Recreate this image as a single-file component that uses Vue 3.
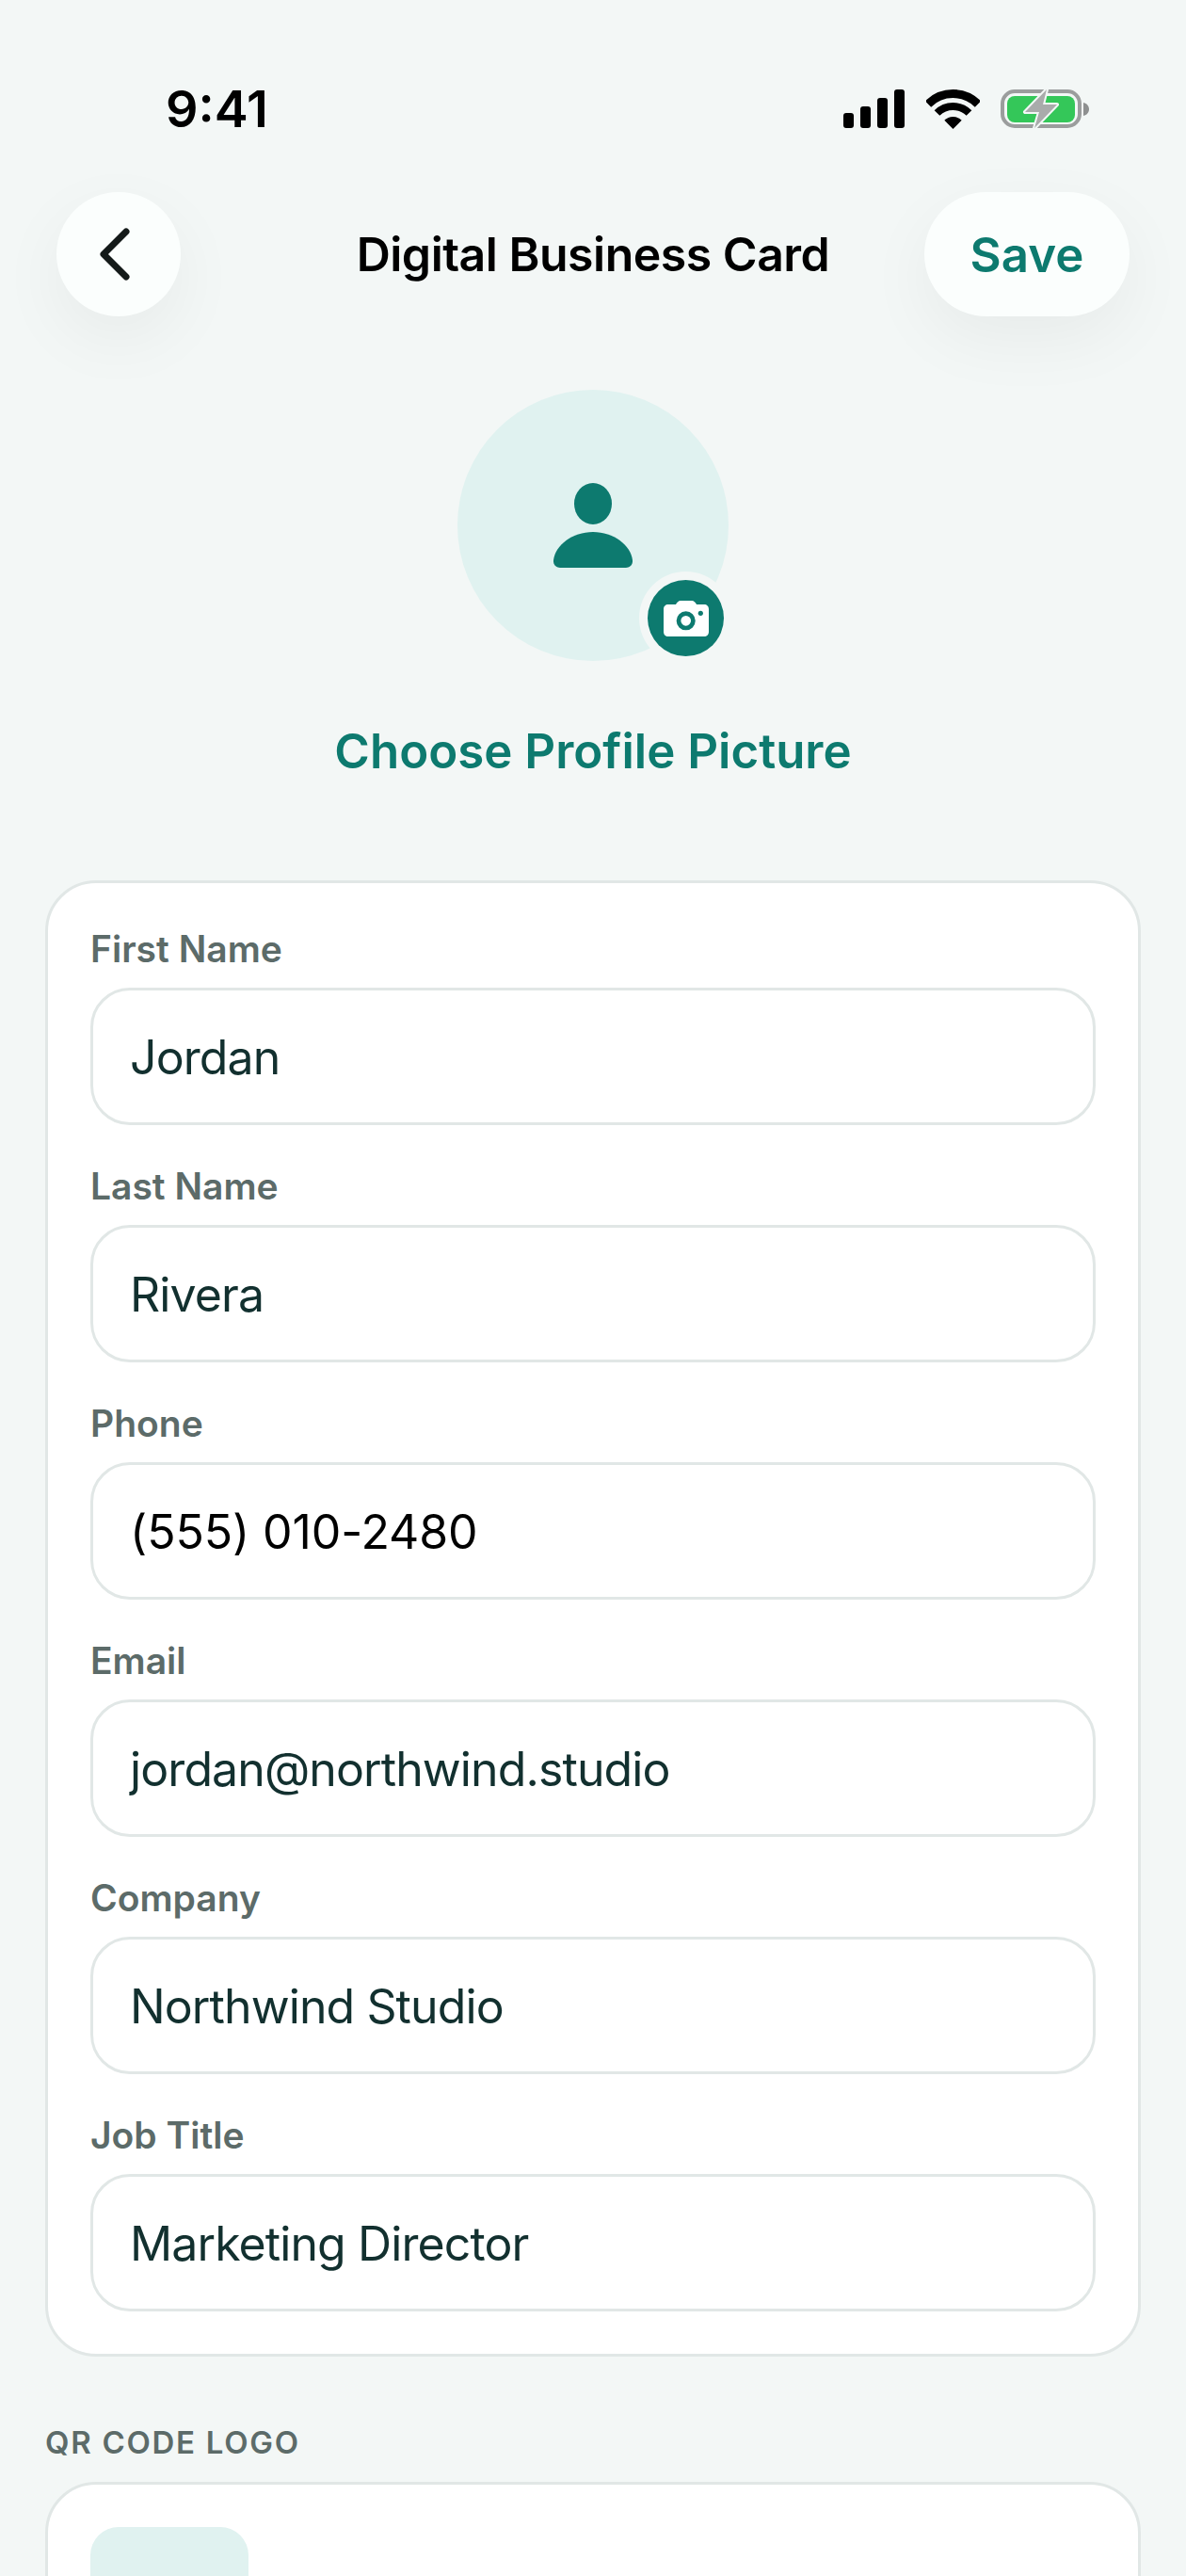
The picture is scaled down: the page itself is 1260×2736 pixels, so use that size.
<script setup>
const fields = [
  { label: 'First Name', value: 'Jordan' },
  { label: 'Last Name', value: 'Rivera' },
  { label: 'Phone', value: '(555) 010-2480', phone: true },
  { label: 'Email', value: 'jordan@northwind.studio' },
  { label: 'Company', value: 'Northwind Studio' },
  { label: 'Job Title', value: 'Marketing Director' }
]
</script>

<template>
  <div class="page">
    <div class="status-bar">
      <span class="time">9:41</span>
      <div class="status-icons">
        <svg width="66" height="41" viewBox="0 0 66 41" fill="#000">
          <rect x="0" y="25" width="11" height="16" rx="3" />
          <rect x="18" y="18" width="11" height="23" rx="3" />
          <rect x="36" y="9" width="11" height="32" rx="3" />
          <rect x="54" y="0" width="11" height="41" rx="3" />
        </svg>
        <svg width="57" height="42" viewBox="0 0 57 42" fill="none">
          <path d="M2 15.5A37.5 37.5 0 0 1 55 15.5" stroke="#000" stroke-width="9" />
          <path d="M11.5 25A24 24 0 0 1 45.5 25" stroke="#000" stroke-width="8" />
          <path d="M28.5 42L19.3 32.8A13 13 0 0 1 37.7 32.8Z" fill="#000" />
        </svg>
        <svg width="94" height="43" viewBox="0 0 94 43" fill="none">
          <rect x="2" y="3" width="82" height="37" rx="13" stroke="#9b9d9d" stroke-width="4" />
          <rect x="7" y="8" width="72" height="28" rx="8" fill="#34c759" />
          <path d="M88 15C92 16 94 19 94 22C94 25 92 28 88 29Z" fill="#8e9090" />
          <path d="M49 1L26 25H41L36 42L60 17H45Z" fill="#a9abab" stroke="#f3f7f6" stroke-width="4" stroke-linejoin="round" paint-order="stroke" />
        </svg>
      </div>
    </div>

    <header class="top-bar">
      <button class="back-btn">
        <svg width="36" height="60" viewBox="0 0 36 60" fill="none">
          <path d="M30 6L6 30L30 54" stroke="#141a19" stroke-width="7" stroke-linecap="round" stroke-linejoin="round" />
        </svg>
      </button>
      <h1 class="title">Digital Business Card</h1>
      <button class="save-btn">Save</button>
    </header>

    <section class="profile">
      <div class="avatar">
        <svg width="84" height="90" viewBox="0 0 84 90" fill="#0d7a6f">
          <ellipse cx="42" cy="22" rx="20" ry="22" />
          <path d="M0 82C2 66 20 52 42 52C64 52 82 66 84 82C84.5 87 81 90 77 90H7C3 90 -.5 87 0 82Z" />
        </svg>
        <span class="badge">
          <svg width="48" height="38" viewBox="0 0 48 38">
            <path d="M5 4H13C14 2 16 0 18 0H30C32 0 34 2 35 4H43C46 4 48 6 48 9V33C48 36 46 38 43 38H5C2 38 0 36 0 33V9C0 6 2 4 5 4Z" fill="#fff" />
            <circle cx="23.7" cy="21.3" r="7.7" fill="none" stroke="#0d7a6f" stroke-width="4.7" />
            <circle cx="39.3" cy="13.3" r="2.6" fill="#0d7a6f" />
          </svg>
        </span>
      </div>
      <div class="choose">Choose Profile Picture</div>
    </section>

    <section class="card fields">
      <div v-for="field in fields" :key="field.label" class="field">
        <label class="field-label">{{ field.label }}</label>
        <div class="field-input" :class="{ phone: field.phone }">{{ field.value }}</div>
      </div>
    </section>

    <h2 class="section-title">QR CODE LOGO</h2>
    <section class="card logo-card">
      <div class="logo-tile"></div>
    </section>
  </div>
</template>

<style scoped>
.page {
  height: 2736px;
  overflow: hidden;
  background: #f3f7f6;
  font-family: Inter, "Liberation Sans", sans-serif;
  box-sizing: border-box;
  padding-top: 94px;
}

.status-bar {
  display: flex;
  justify-content: space-between;
  align-items: center;
  height: 43px;
  padding: 0 103px 0 176px;
}

.time {
  font-size: 54px;
  font-weight: 600;
  color: #000;
  line-height: 43px;
}

.status-icons {
  display: flex;
  align-items: center;
  gap: 22px;
}

.top-bar {
  display: grid;
  grid-template-columns: 1fr auto 1fr;
  align-items: center;
  margin-top: 67px;
  padding: 0 60px;
}

.back-btn,
.save-btn {
  height: 132px;
  border: none;
  background: #fbfefd;
  box-shadow: 0 24px 72px rgba(0, 0, 0, 0.05);
  font-family: inherit;
}

.back-btn {
  width: 132px;
  border-radius: 50%;
  display: flex;
  align-items: center;
  justify-content: center;
  padding: 0 8px 0 0;
}

.title {
  margin: 0;
  font-size: 50px;
  font-weight: 600;
  letter-spacing: -0.5px;
  color: #000;
}

.save-btn {
  justify-self: end;
  width: 218px;
  border-radius: 66px;
  padding: 0;
  font-size: 51px;
  font-weight: 600;
  color: #0d7a6f;
}

.profile {
  display: flex;
  flex-direction: column;
  align-items: center;
  margin-top: 78px;
}

.avatar {
  position: relative;
  width: 288px;
  height: 288px;
  border-radius: 50%;
  background: #e0f2f0;
  display: flex;
  align-items: center;
  justify-content: center;
}

.badge {
  position: absolute;
  left: 202px;
  top: 202px;
  width: 81px;
  height: 81px;
  border-radius: 50%;
  background: #0d7a6f;
  box-shadow: 0 0 0 9px #f3f7f6;
  display: flex;
  align-items: center;
  justify-content: center;
}

.choose {
  margin-top: 64px;
  font-size: 51px;
  line-height: 64px;
  font-weight: 600;
  color: #0d7a6f;
}

.card {
  margin: 0 48px;
  background: #fff;
  border: 3px solid #e1e7e6;
  border-radius: 54px;
  box-sizing: border-box;
}

.fields {
  margin-top: 105px;
  padding: 47px 45px 45px;
  display: flex;
  flex-direction: column;
  gap: 42px;
}

.field-label {
  display: block;
  font-size: 39px;
  line-height: 46px;
  font-weight: 600;
  color: #5c6b69;
  margin-bottom: 18px;
}

.field-input {
  height: 146px;
  box-sizing: border-box;
  border: 3px solid #e1e7e6;
  border-radius: 42px;
  padding: 2px 39px 0;
  display: flex;
  align-items: center;
  font-size: 50px;
  letter-spacing: -0.9px;
  color: #12302f;
}

.field-input.phone {
  letter-spacing: -0.1px;
  color: #000;
}

.section-title {
  margin: 69px 48px 0;
  font-size: 33px;
  line-height: 44px;
  font-weight: 600;
  letter-spacing: 1.7px;
  color: #5c6b69;
}

.logo-card {
  margin-top: 20px;
  padding: 45px;
}

.logo-tile {
  width: 168px;
  height: 168px;
  border-radius: 30px;
  background: #e0f2f0;
}
</style>

<style>
html,
body {
  margin: 0;
  background: #f3f7f6;
}
</style>
